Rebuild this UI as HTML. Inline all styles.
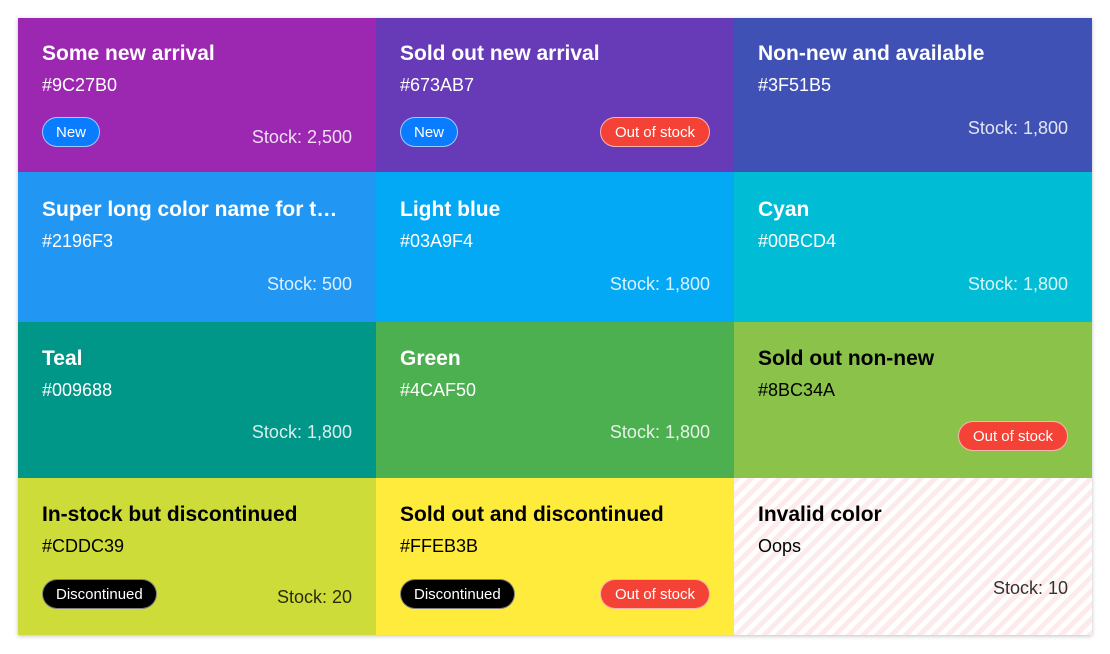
<!DOCTYPE html><html><head><style>
body{margin:0;width:1110px;height:654px;background:#fff;font-family:"Liberation Sans",sans-serif;overflow:hidden}
.g{position:absolute;left:18px;top:18px;width:1074px;box-shadow:0 1px 4px rgba(0,0,0,.25)}
.c{position:absolute;width:358px;color:#fff;box-sizing:border-box}
.t{position:absolute;left:24px;font-weight:bold;font-size:21px;white-space:nowrap;overflow:hidden;text-overflow:ellipsis;max-width:302px;line-height:24px}
.h{position:absolute;left:24px;font-size:18px;line-height:20px}
.s{position:absolute;right:24px;font-size:18px;line-height:20px;opacity:.85}
.b{position:absolute;height:30px;line-height:29px;box-sizing:border-box;border-radius:15px;font-size:15px;padding:0 14px;border:1px solid rgba(255,255,255,.6);color:#fff}
.new{background:#0a7cff;padding:0 13px}.out{background:#f44336;padding:0 14px}.dis{background:#000;border-color:rgba(255,255,255,.5);padding:0 13px}
.d{color:#000}.d .s{opacity:.8}
</style></head><body><div class="g" style="height:617px">
<div class="c" style="left:0;top:0;height:154px;background:#9C27B0"><div class="t" style="top:24px">Some new arrival</div><div class="h" style="top:57px">#9C27B0</div><div class="b new" style="left:24px;top:99px">New</div><div class="s" style="top:109px">Stock: 2,500</div></div>
<div class="c" style="left:358px;top:0;height:154px;background:#673AB7"><div class="t" style="top:24px">Sold out new arrival</div><div class="h" style="top:57px">#673AB7</div><div class="b new" style="left:24px;top:99px">New</div><div class="b out" style="right:24px;top:99px">Out of stock</div></div>
<div class="c" style="left:716px;top:0;height:154px;background:#3F51B5"><div class="t" style="top:24px">Non-new and available</div><div class="h" style="top:57px">#3F51B5</div><div class="s" style="top:100px">Stock: 1,800</div></div>
<div class="c" style="left:0;top:154px;height:150px;background:#2196F3"><div class="t" style="top:26px">Super long color name for the test</div><div class="h" style="top:59px">#2196F3</div><div class="s" style="top:102px">Stock: 500</div></div>
<div class="c" style="left:358px;top:154px;height:150px;background:#03A9F4"><div class="t" style="top:26px">Light blue</div><div class="h" style="top:59px">#03A9F4</div><div class="s" style="top:102px">Stock: 1,800</div></div>
<div class="c" style="left:716px;top:154px;height:150px;background:#00BCD4"><div class="t" style="top:26px">Cyan</div><div class="h" style="top:59px">#00BCD4</div><div class="s" style="top:102px">Stock: 1,800</div></div>
<div class="c" style="left:0;top:304px;height:156px;background:#009688"><div class="t" style="top:25px">Teal</div><div class="h" style="top:58px">#009688</div><div class="s" style="top:100px">Stock: 1,800</div></div>
<div class="c" style="left:358px;top:304px;height:156px;background:#4CAF50"><div class="t" style="top:25px">Green</div><div class="h" style="top:58px">#4CAF50</div><div class="s" style="top:100px">Stock: 1,800</div></div>
<div class="c d" style="left:716px;top:304px;height:156px;background:#8BC34A"><div class="t" style="top:25px">Sold out non-new</div><div class="h" style="top:58px">#8BC34A</div><div class="b out" style="right:24px;top:99px">Out of stock</div></div>
<div class="c d" style="left:0;top:460px;height:157px;background:#CDDC39"><div class="t" style="top:25px">In-stock but discontinued</div><div class="h" style="top:58px">#CDDC39</div><div class="b dis" style="left:24px;top:101px">Discontinued</div><div class="s" style="top:109px">Stock: 20</div></div>
<div class="c d" style="left:358px;top:460px;height:157px;background:#FFEB3B"><div class="t" style="top:25px">Sold out and discontinued</div><div class="h" style="top:58px">#FFEB3B</div><div class="b dis" style="left:24px;top:101px">Discontinued</div><div class="b out" style="right:24px;top:101px">Out of stock</div></div>
<div class="c d" style="left:716px;top:460px;height:157px;background:repeating-linear-gradient(135deg,#fdeaea 0 5px,#fff 5px 10px)"><div class="t" style="top:25px">Invalid color</div><div class="h" style="top:58px">Oops</div><div class="s" style="top:100px">Stock: 10</div></div>
</div></body></html>
